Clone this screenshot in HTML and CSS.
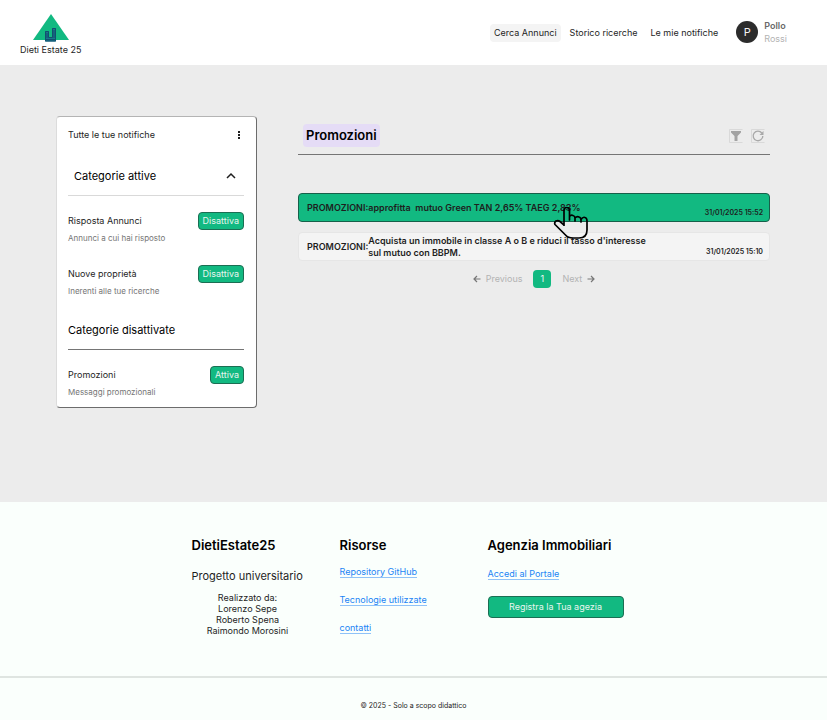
FILE: index.html
```html
<!DOCTYPE html>
<html lang="it">
<head>
<meta charset="utf-8">
<meta name="viewport" content="width=device-width, initial-scale=1">
<title>DietiEstate25 - Notifiche</title>
<link rel="stylesheet" href="styles.css">
</head>
<body>
<header class="header">
  <a class="brand" href="#">
    <svg class="brand-logo" width="36" height="28" viewBox="0 0 36 28" aria-hidden="true">
      <path d="M18 0 36 26H0Z" fill="#12b981"/>
      <path d="M12 17h4v6h3v-9h4v13.500H12Z" fill="#17788a"/>
      <path d="M12.500 27V17.500h3v6h4v-9h3V27ZM14 19v5M21 16v8M13 25.500h9" fill="none" stroke="#124f70"/>
    </svg>
    <span>Dieti Estate 25</span>
  </a>
  <nav class="nav">
    <a class="nav-link nav-link-active" href="#">Cerca Annunci</a>
    <a class="nav-link" href="#">Storico ricerche</a>
    <a class="nav-link" href="#">Le mie notifiche</a>
  </nav>
  <div class="user">
    <span class="avatar">P</span>
    <div class="user-name"><strong>Pollo</strong><span>Rossi</span></div>
  </div>
</header>

<main class="main">
  <aside class="sidebar">
    <div class="sidebar-top">
      <span>Tutte le tue notifiche</span>
      <button class="icon-button" type="button" aria-label="Altre opzioni">
        <svg width="10" height="10" viewBox="0 0 10 10"><path d="M4 1h2v2H4zM4 4h2v2H4zM4 7h2v2H4z" fill="#1e1e1e"/></svg>
      </button>
    </div>
    <div class="group-head group-head-light">
      <h2>Categorie attive</h2>
      <button class="icon-button" type="button" aria-label="Comprimi">
        <svg width="10" height="8" viewBox="0 0 10 8"><path d="M1 6l4-4 4 4" fill="none" stroke="#1e1e1e" stroke-width="1.500"/></svg>
      </button>
    </div>
    <ul class="categories">
      <li class="category">
        <h3>Risposta Annunci</h3>
        <button class="button button-small" type="button">Disattiva</button>
        <p>Annunci a cui hai risposto</p>
      </li>
      <li class="category">
        <h3>Nuove proprietà</h3>
        <button class="button button-small" type="button">Disattiva</button>
        <p>Inerenti alle tue ricerche</p>
      </li>
    </ul>
    <div class="group-head">
      <h2>Categorie disattivate</h2>
    </div>
    <ul class="categories">
      <li class="category">
        <h3>Promozioni</h3>
        <button class="button button-small" type="button">Attiva</button>
        <p>Messaggi promozionali</p>
      </li>
    </ul>
  </aside>

  <section class="content">
    <div class="content-head">
      <h1>Promozioni</h1>
      <div class="tools">
        <button class="icon-button" type="button" aria-label="Filtra">
          <svg width="14" height="14" viewBox="0 0 14 14"><path d="M.5 13.500V.5h13M.5 13.500h13" fill="none" stroke="#d9d9d9"/><path d="M2 2h10v1.500L8.500 7v5h-3V7L2 3.500Z" fill="#a3a3a3"/></svg>
        </button>
        <button class="icon-button" type="button" aria-label="Aggiorna">
          <svg width="14" height="14" viewBox="0 0 14 14"><path d="M.5 13.500V.5h13M.5 13.500h13" fill="none" stroke="#d9d9d9"/><path d="M10.800 4A4.800 4.800 0 1 0 11.800 7" fill="none" stroke="#a8a8a8" stroke-width="1.300"/><path d="M12.500 2v4H8.500Z" fill="#a8a8a8"/></svg>
        </button>
      </div>
    </div>
    <ul class="messages">
      <li class="message message-selected">
        <span>PROMOZIONI:</span>
        <p>approfitta  mutuo Green TAN 2,65% TAEG 2,83%</p>
        <time>31/01/2025 15:52</time>
        <svg class="pointer" width="36" height="34" viewBox="0 0 36 34" aria-hidden="true">
          <path d="M11 20V4.500Q11 1.500 13.500 1.500Q16.500 1.500 16.500 4.500V14V10.500Q18 8.500 20 9.500Q22 10 22 12V15V12Q24 10 26 11Q28 11.500 28 14V16V13.500Q30 10.500 32 11.500Q34 12 34 15V24Q34 32 26 32H20Q15 32 12.500 29L2 18.500Q1 16.500 3 15Q5 14 7 15.500L11 19" fill="none" stroke="#000" stroke-width="1.700" stroke-linejoin="round"/>
        </svg>
      </li>
      <li class="message">
        <span>PROMOZIONI:</span>
        <p>Acquista un immobile in classe A o B e riduci il tasso d'interesse sul mutuo con BBPM.</p>
        <time>31/01/2025 15:10</time>
      </li>
    </ul>
    <nav class="pagination" aria-label="Pagine">
      <a href="#"><svg width="8" height="8" viewBox="0 0 8 8"><path d="M7.500 4H1M4 1 1 4l3 3" fill="none" stroke="#777" stroke-width="1.200"/></svg>Previous</a>
      <a class="page-current" href="#">1</a>
      <a href="#">Next<svg width="8" height="8" viewBox="0 0 8 8"><path d="M.5 4H7M4 1l3 3-3 3" fill="none" stroke="#777" stroke-width="1.200"/></svg></a>
    </nav>
  </section>
</main>

<footer class="footer">
  <div class="footer-columns">
    <section class="about">
      <h2>DietiEstate25</h2>
      <p class="about-lead">Progetto universitario</p>
      <p class="about-team">Realizzato da:<br>Lorenzo Sepe<br>Roberto Spena<br>Raimondo Morosini</p>
    </section>
    <section>
      <h2>Risorse</h2>
      <ul class="links">
        <li><a href="#">Repository GitHub</a></li>
        <li><a href="#">Tecnologie utilizzate</a></li>
        <li><a href="#">contatti</a></li>
      </ul>
    </section>
    <section class="agency">
      <h2>Agenzia Immobiliari</h2>
      <ul class="links"><li><a href="#">Accedi al Portale</a></li></ul>
      <button class="button button-wide" type="button">Registra la Tua agezia</button>
    </section>
  </div>
  <p class="copyright">© 2025 - Solo a scopo didattico</p>
</footer>
</body>
</html>
```
FILE: styles.css
```css
* { box-sizing: border-box; }

body {
  margin: 0;
  min-height: 100vh;
  display: flex;
  flex-direction: column;
  background: #ececec;
  color: #1e1e1e;
  font: 9px/12px Inter, "Liberation Sans", sans-serif;
}

h1, h2, h3, p, ul { margin: 0; padding: 0; font-weight: 400; }
ul { list-style: none; }
a { color: inherit; text-decoration: none; }
svg { display: block; }

button {
  margin: 0;
  padding: 0;
  font: inherit;
  cursor: pointer;
}

.icon-button { border: 0; background: none; }

.header {
  display: flex;
  align-items: center;
  padding: 14px 40px 9px 20px;
  background: #fff;
}

.brand {
  display: flex;
  flex-direction: column;
  align-items: center;
  gap: 2px;
  line-height: 12px;
}

.nav {
  display: flex;
  align-items: center;
  gap: 5px;
  margin: 0 0 4px auto;
}

.nav-link { padding: 3px 4px; border-radius: 4px; }
.nav-link-active { background: #f4f4f4; }

.user {
  display: flex;
  align-items: center;
  gap: 6px;
  margin: 0 0 6px 14px;
}

.avatar {
  width: 22px;
  height: 22px;
  border-radius: 50%;
  background: #2c2c2c;
  color: #f5f5f5;
  font-size: 11px;
  line-height: 22px;
  text-align: center;
}

.user-name {
  display: flex;
  flex-direction: column;
  line-height: 13px;
  color: #b3b3b3;
}

.user-name strong { color: #6a6a6a; font-weight: 600; }

.main {
  flex: 1;
  display: grid;
  grid-template-columns: 201px 1fr;
  align-items: start;
  gap: 41px;
  padding: 51px 57px 50px 56px;
}

.sidebar {
  padding: 11px 12px 9px 11px;
  border: 1px solid #6c6c6c;
  border-top-color: #b4b4b4;
  border-left-color: #dcdcdc;
  border-radius: 4px;
  background: #fff;
}

.sidebar-top {
  display: flex;
  align-items: center;
  justify-content: space-between;
  height: 14px;
  margin-bottom: 26px;
}

.group-head {
  display: flex;
  align-items: center;
  justify-content: space-between;
  padding-bottom: 11px;
  border-bottom: 1px solid #757575;
}

.group-head-light { padding-left: 6px; padding-right: 8px; border-color: #d9d9d9; }
.group-head h2 { font-size: 11px; line-height: 16px; color: #000; }

.categories {
  display: grid;
  gap: 21px;
  padding-top: 16px;
}

.categories + .group-head { margin-top: 25px; }

.category {
  display: grid;
  grid-template-columns: 1fr auto;
  align-items: center;
  row-gap: 2px;
}

.category h3 { font-size: 9px; }
.category p { font-size: 8px; color: #757575; }

.button {
  border: 1px solid #1b6e53;
  border-radius: 4px;
  background: #12b981;
  color: #e8f5ef;
}

.button-small { height: 18px; padding: 0 4px; }

.content-head {
  display: flex;
  align-items: center;
  justify-content: space-between;
  padding: 8px 5px 7px;
  border-bottom: 1px solid #757575;
}

.content-head h1 {
  padding: 0 3px;
  border-radius: 4px;
  background: #e5dcf6;
  color: #000;
  font-size: 13px;
  line-height: 23px;
  font-weight: 600;
}

.tools { display: flex; gap: 8px; }

.messages { display: grid; gap: 10px; margin-top: 38px; }

.message {
  position: relative;
  display: flex;
  align-items: center;
  height: 29px;
  padding: 0 6px 0 8px;
  border: 1px solid #e6e6e6;
  border-radius: 4px;
  background: #f4f4f4;
  font-weight: 600;
}

.message-selected { border-color: #17604a; background: #12b981; }
.message p { max-width: 288px; white-space: pre-wrap; font-weight: 600; }
.message time { margin-left: auto; align-self: flex-end; font-size: 7px; line-height: 8px; padding-bottom: 4px; }

.pointer { position: absolute; left: 254px; top: 12px; z-index: 1; }

.pagination {
  display: flex;
  align-items: center;
  justify-content: center;
  gap: 11px;
  margin-top: 9px;
  color: #b3b3b3;
}

.pagination a { display: flex; align-items: center; gap: 5px; }

.pagination .page-current {
  justify-content: center;
  width: 18px;
  height: 18px;
  border-radius: 4px;
  background: #12b981;
  color: #f5f5f5;
}

.footer { background: #fafffc; }

.footer-columns {
  display: grid;
  grid-template-columns: 112px 112px 136px;
  justify-content: center;
  column-gap: 36px;
  padding: 35px 12px 40px 0;
  border-bottom: 2px solid #dfe5e1;
}

.footer-columns h2 { font-size: 13px; line-height: 16px; font-weight: 600; color: #000; white-space: nowrap; }

.about-lead { margin-top: 15px; font-size: 11px; line-height: 16px; white-space: nowrap; }
.about-team { margin-top: 8px; line-height: 11px; text-align: center; }

.links { display: grid; gap: 16px; margin-top: 13px; color: #1a84f5; }
.links a { border-bottom: 1px solid #8fc2f8; }

.agency .links { margin-top: 15px; }
.button-wide { width: 100%; height: 22px; margin-top: 16px; }

.copyright { padding: 22px 0 8px; font-size: 7px; text-align: center; }
```
